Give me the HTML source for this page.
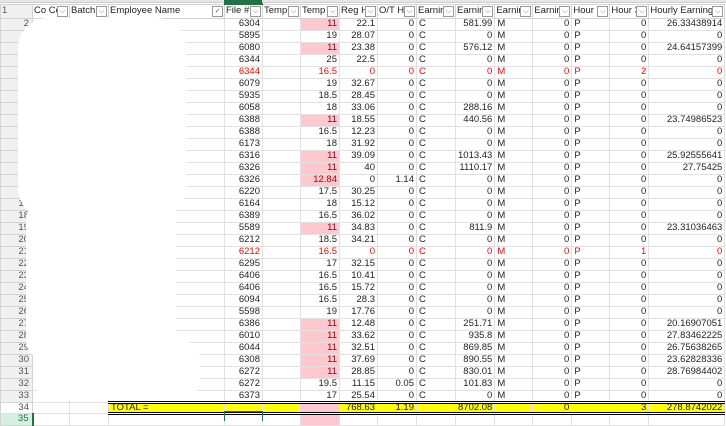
<!DOCTYPE html>
<html><head><meta charset="utf-8">
<style>
*{margin:0;padding:0;box-sizing:border-box}
body{width:726px;height:421px;overflow:hidden;background:#fff;font-family:"Liberation Sans",Arial,sans-serif;font-size:9.5px;color:#222;position:relative}
table{position:absolute;left:0;top:3px;border-collapse:collapse;table-layout:fixed}
td{height:12px;border:1px solid #e1e1e1;padding:0 2px;white-space:nowrap;overflow:hidden;line-height:10px;text-align:right}
tr.h td{height:14px;text-align:left;padding:0 1px;position:relative;border-color:#d4d4d4}
td.rh{background:#f0f0f0;color:#555;text-align:right;padding-right:3px;border-color:#d4d4d4}
td.l{text-align:left}
td.p{background:#ffc7ce;color:#9c0006}
tr.r td{color:#f00}
tr.r td.rh{color:#555}
tr.t td{background:#ff0;border-top:3px double #000;border-bottom:3px double #000;height:10px;line-height:8px}
tr.t td.rh,tr.t td.n{background:#fff;border-top:1px solid #e1e1e1;border-bottom:1px solid #e1e1e1}
tr.t td.p{background:#ffc7ce}
.fb{position:absolute;right:1px;top:1px;width:11px;height:11px;border:1px solid #999;background:#fff;font-size:7px;text-align:center;line-height:9px;color:#666}
.top{position:absolute;left:0;top:0;width:726px;height:3px;background:#e6e6e6;border-bottom:1px solid #ccc}
.blob{position:absolute;background:#fff;border-radius:30px}
</style></head><body>
<div class="top"></div>
<div style="position:absolute;left:224px;top:0;width:38px;height:3px;background:#217346"></div>
<table id="t">
<colgroup><col style="width:32px"><col style="width:37px"><col style="width:39px"><col style="width:116px"><col style="width:38px"><col style="width:38px"><col style="width:39px"><col style="width:38px"><col style="width:39px"><col style="width:39px"><col style="width:39px"><col style="width:38px"><col style="width:39px"><col style="width:38px"><col style="width:39px"><col style="width:76px"></colgroup>
<tbody id="b"></tbody></table>
<div class="blob" style="left:18px;top:18px;width:168px;height:200px"></div>
<div class="blob" style="left:26px;top:200px;width:150px;height:160px;border-radius:20px"></div>
<div class="blob" style="left:34px;top:340px;width:166px;height:60px;border-radius:20px"></div>
<div style="position:absolute;left:224px;top:411px;width:39px;height:10px;border:1.5px solid #217346;border-bottom:none"></div>
<script>
var H=["Co Co","Batch","Employee Name","File #","Temp","Temp R","Reg Hc","O/T Hc","Earnin","Earnin","Earnin","Earnin","Hour 3","Hour 3","Hourly Earning T"];
var D=[
["6304","11p","22.1","0","581.99","0","0","26.33438914"],
["5895","19","28.07","0","0","0","0","0"],
["6080","11p","23.38","0","576.12","0","0","24.64157399"],
["6344","25","22.5","0","0","0","0","0"],
["6344","16.5","0","0","0","0","2","0","r"],
["6079","19","32.67","0","0","0","0","0"],
["5935","18.5","28.45","0","0","0","0","0"],
["6058","18","33.06","0","288.16","0","0","0"],
["6388","11p","18.55","0","440.56","0","0","23.74986523"],
["6388","16.5","12.23","0","0","0","0","0"],
["6173","18","31.92","0","0","0","0","0"],
["6316","11p","39.09","0","1013.43","0","0","25.92555641"],
["6326","11p","40","0","1110.17","0","0","27.75425"],
["6326","12.84p","0","1.14","0","0","0","0"],
["6220","17.5","30.25","0","0","0","0","0"],
["6164","18","15.12","0","0","0","0","0"],
["6389","16.5","36.02","0","0","0","0","0"],
["5589","11p","34.83","0","811.9","0","0","23.31036463"],
["6212","18.5","34.21","0","0","0","0","0"],
["6212","16.5","0","0","0","0","1","0","r"],
["6295","17","32.15","0","0","0","0","0"],
["6406","16.5","10.41","0","0","0","0","0"],
["6406","16.5","15.72","0","0","0","0","0"],
["6094","16.5","28.3","0","0","0","0","0"],
["5598","19","17.76","0","0","0","0","0"],
["6386","11p","12.48","0","251.71","0","0","20.16907051"],
["6010","11p","33.62","0","935.8","0","0","27.83462225"],
["6044","11p","32.51","0","869.85","0","0","26.75638265"],
["6308","11p","37.69","0","890.55","0","0","23.62828336"],
["6272","11p","28.85","0","830.01","0","0","28.76984402"],
["6272","19.5","11.15","0.05","101.83","0","0","0"],
["6373","17","25.54","0","0","0","0","0"]];
var s='<tr class="h"><td class="rh">1</td>';
H.forEach(function(h,i){s+='<td'+(i==3?' style="border-top:2px solid #217346"':'')+'>'+h+'<span class="fb"'+(i==2?' style="color:#217346">✓':'>⌵')+'</span></td>';});
s+='</tr>';
D.forEach(function(r,k){
 var p=r[1].indexOf('p')>0,v=r[1].replace('p','');
 s+='<tr'+(r[8]?' class="r"':'')+'><td class="rh">'+(k+2)+'</td><td></td><td></td><td></td><td>'+r[0]+'</td><td></td><td'+(p?' class="p"':'')+'>'+v+'</td><td>'+r[2]+'</td><td>'+r[3]+'</td><td class="l">C</td><td>'+r[4]+'</td><td class="l">M</td><td>'+r[5]+'</td><td class="l">P</td><td>'+r[6]+'</td><td>'+r[7]+'</td></tr>';
});
s+='<tr class="t"><td class="rh">34</td><td class="n"></td><td class="n"></td><td class="l">TOTAL =</td><td></td><td></td><td class="p"></td><td>768.63</td><td>1.19</td><td></td><td>8702.08</td><td></td><td>0</td><td></td><td>3</td><td>278.8742022</td></tr>';
s+='<tr><td class="rh" style="background:#d3f0e0;color:#217346;border-right:2px solid #217346">35</td><td></td><td></td><td></td><td></td><td></td><td class="p"></td><td></td><td></td><td></td><td></td><td></td><td></td><td></td><td></td><td></td></tr>';
document.getElementById('b').innerHTML=s;
</script>
</body></html>
